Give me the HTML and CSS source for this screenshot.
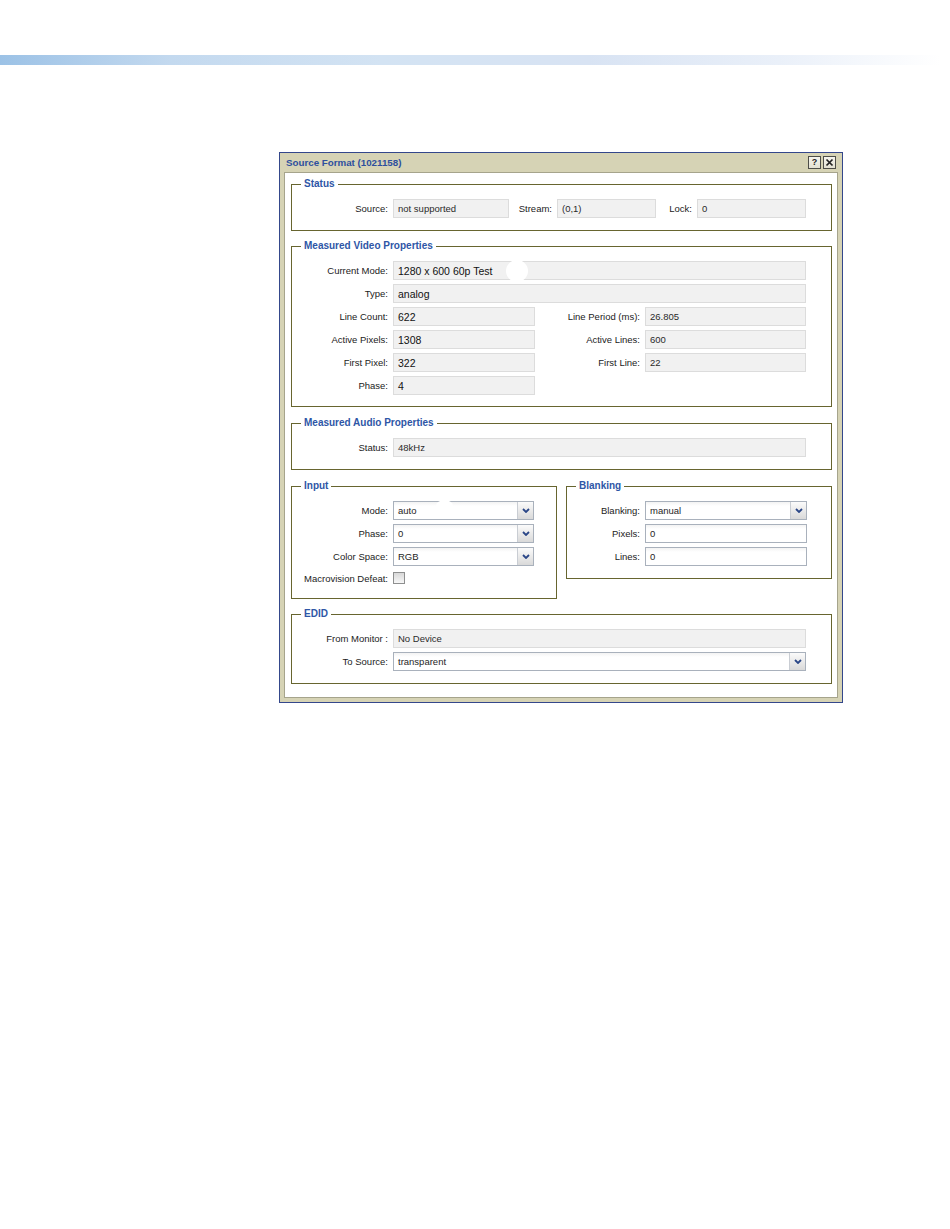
FILE: index.html
```html
<!DOCTYPE html>
<html lang="en">
<head>
    <meta charset="UTF-8">
    <title>Source Format</title>
    <link rel="stylesheet" href="styles.css">
</head>
<body>

<div class="topbar"></div>

<div class="dialog">
    <div class="titlebar">
        <span class="title">Source Format (1021158)</span>
        <span class="tbtns">
            <span class="tbtn">?</span>
            <span class="tbtn"><svg viewBox="0 0 9 9" width="9" height="9"><path d="M1.5 1.5l6 6M7.5 1.5l-6 6"/></svg></span>
        </span>
    </div>

    <div class="content">
        <fieldset class="group">
            <legend>Status</legend>
            <div class="rows status">
                <label>Source:</label><div class="ro">not supported</div>
                <label>Stream:</label><div class="ro">(0,1)</div>
                <label>Lock:</label><div class="ro">0</div>
            </div>
        </fieldset>

        <fieldset class="group gap10">
            <legend>Measured Video Properties</legend>
            <div class="rows video">
                <label>Current Mode:</label><div class="ro big wide mode">1280 x 600 60p Test<span class="blot"></span></div>
                <label>Type:</label><div class="ro big wide">analog</div>
                <label>Line Count:</label><div class="ro big">622</div>
                <label>Line Period (ms):</label><div class="ro">26.805</div>
                <label>Active Pixels:</label><div class="ro big">1308</div>
                <label>Active Lines:</label><div class="ro">600</div>
                <label>First Pixel:</label><div class="ro big">322</div>
                <label>First Line:</label><div class="ro">22</div>
                <label>Phase:</label><div class="ro big">4</div>
            </div>
        </fieldset>

        <fieldset class="group gap10">
            <legend>Measured Audio Properties</legend>
            <div class="rows single">
                <label>Status:</label><div class="ro">48kHz</div>
            </div>
        </fieldset>

        <div class="pair">
            <fieldset class="group">
                <legend>Input</legend>
                <div class="rows input">
                    <label>Mode:</label>
                    <div class="sel mode-sel"><span class="val">auto</span><span class="drop"><svg viewBox="0 0 8 5" width="8" height="5"><path d="M1 1l3 3 3-3"/></svg></span><span class="blot2"></span></div>
                    <label>Phase:</label>
                    <div class="sel"><span class="val">0</span><span class="drop"><svg viewBox="0 0 8 5" width="8" height="5"><path d="M1 1l3 3 3-3"/></svg></span></div>
                    <label>Color Space:</label>
                    <div class="sel"><span class="val">RGB</span><span class="drop"><svg viewBox="0 0 8 5" width="8" height="5"><path d="M1 1l3 3 3-3"/></svg></span></div>
                    <label>Macrovision Defeat:</label>
                    <div class="chk-cell"><span class="chk"></span></div>
                </div>
            </fieldset>

            <fieldset class="group">
                <legend>Blanking</legend>
                <div class="rows blanking">
                    <label>Blanking:</label>
                    <div class="sel"><span class="val">manual</span><span class="drop"><svg viewBox="0 0 8 5" width="8" height="5"><path d="M1 1l3 3 3-3"/></svg></span></div>
                    <label>Pixels:</label><div class="txt">0</div>
                    <label>Lines:</label><div class="txt">0</div>
                </div>
            </fieldset>
        </div>

        <fieldset class="group last">
            <legend>EDID</legend>
            <div class="rows single">
                <label>From Monitor :</label><div class="ro">No Device</div>
                <label>To Source:</label>
                <div class="sel"><span class="val">transparent</span><span class="drop"><svg viewBox="0 0 8 5" width="8" height="5"><path d="M1 1l3 3 3-3"/></svg></span></div>
            </div>
        </fieldset>
    </div>
</div>

</body>
</html>
```

FILE: styles.css
```css
body {
    margin: 0;
    background: #fff;
    font-family: "Liberation Sans", Arial, sans-serif;
    font-size: 9.5px;
    color: #1e1e1e;
}

.topbar {
    margin-top: 55px;
    height: 10px;
    background: linear-gradient(to right, #9cc2e6 0%, #c3d9ef 18%, #d3e3f3 40%, #d8e3f3 62%, #eaf0f9 82%, #ffffff 99%);
}

/* dialog frame */
.dialog {
    width: 554px;
    margin: 87px 0 0 279px;
    border: 1px solid #34478b;
    background: #d6d3b5;
    padding: 0 4px 4px;
}

.titlebar {
    height: 19px;
    display: flex;
    align-items: center;
    justify-content: space-between;
    padding: 0 2px;
}

.title {
    font-weight: bold;
    font-size: 9.75px;
    color: #2d4f9e;
}

.tbtns {
    display: flex;
    gap: 2px;
}

.tbtn {
    width: 11px;
    height: 11px;
    border: 1px solid #4d4d48;
    background: linear-gradient(#f6f5ee, #e2e0d2);
    display: flex;
    align-items: center;
    justify-content: center;
    font-weight: bold;
    font-size: 9px;
    line-height: 1;
    color: #222;
}

.tbtn svg path {
    fill: none;
    stroke: #222;
    stroke-width: 1.7;
}

.content {
    background: #fff;
    border: 1px solid #a6a48c;
    padding: 5px 5px 13px 6px;
}

/* group boxes */
.group {
    margin: 0 0 9px;
    padding: 0;
    border: 1px solid #67652f;
    min-width: 0;
}

.group.gap10 {
    margin-bottom: 10px;
}

.group.last {
    margin-bottom: 0;
}

.group legend {
    margin-left: 9px;
    padding: 0 3px;
    font-weight: bold;
    font-size: 10px;
    color: #2e56a6;
    line-height: 12px;
}

.rows {
    display: grid;
    grid-auto-rows: 19px;
    row-gap: 4px;
    column-gap: 5px;
    padding: 9px 25px 12px 0;
}

.rows label {
    text-align: right;
    align-self: center;
    white-space: nowrap;
    color: #222;
}

.status {
    grid-template-columns: 96px 116px 38px 99px 31px 109px;
}

.video {
    grid-template-columns: 96px 142px 100px 161px;
    padding-bottom: 11px;
}

.video .wide {
    grid-column: 2 / -1;
}

.single {
    grid-template-columns: 96px 1fr;
}

.pair {
    display: grid;
    grid-template-columns: 1fr 1fr;
    column-gap: 9px;
    align-items: start;
    margin-bottom: 9px;
}

.pair .group {
    margin: 0;
}

.input {
    grid-template-columns: 96px 141px;
    grid-template-rows: 19px 19px 19px 16px;
    padding-right: 0;
}

.blanking {
    grid-template-columns: 73px 162px;
    padding-right: 0;
}

/* fields */
.ro, .txt {
    box-sizing: border-box;
    display: flex;
    align-items: center;
    padding-left: 4px;
    white-space: nowrap;
}

.ro {
    background: #f1f1f1;
    border: 1px solid #dcdcdc;
    color: #2a2a2a;
}

.ro.big {
    font-size: 10.5px;
    color: #111;
}

.txt {
    background: linear-gradient(#f3f3f3, #fff 4px);
    border: 1px solid #a9b1bc;
}

.sel {
    box-sizing: border-box;
    display: flex;
    border: 1px solid #a9b1bc;
    background: linear-gradient(#f3f3f3, #fff 4px);
    position: relative;
}

.sel .val {
    flex: 1;
    display: flex;
    align-items: center;
    padding-left: 4px;
}

.drop {
    width: 15px;
    border-left: 1px solid #c9cdd3;
    background: linear-gradient(#fbfbfb, #d9d9d9);
    display: flex;
    align-items: center;
    justify-content: center;
}

.drop svg path {
    fill: none;
    stroke: #2a4687;
    stroke-width: 1.8;
}

.chk-cell {
    display: flex;
    align-items: center;
}

.chk {
    width: 10px;
    height: 10px;
    border: 1px solid #8e8f8f;
    background: linear-gradient(#d8d8d8, #f7f7f7);
}

/* white marks lying over two fields */
.mode {
    position: relative;
}

.blot {
    position: absolute;
    left: 112px;
    top: -2px;
    width: 22px;
    height: 22px;
    border-radius: 50%;
    background: #fff;
}

.blot2 {
    position: absolute;
    left: 42px;
    top: -2px;
    width: 17px;
    height: 19px;
    border-radius: 9px 9px 0 0 / 6px 6px 0 0;
    background: #fff;
}
```
